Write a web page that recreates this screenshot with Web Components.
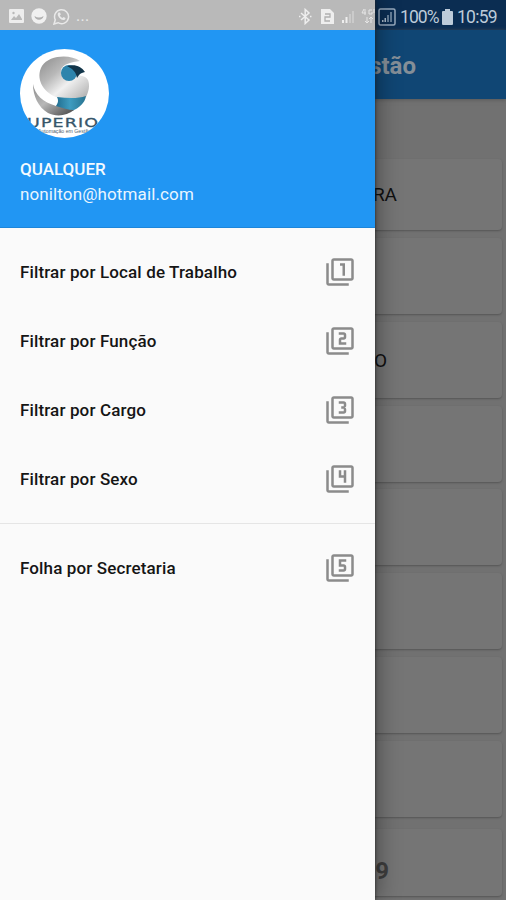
<!DOCTYPE html>
<html lang="pt-BR"><head><meta charset="utf-8"><title>Gestão</title>
<style>
html,body{margin:0;height:900px;overflow:hidden}
body{font-family:Roboto,"Liberation Sans",sans-serif;width:506px}
</style></head><body>
<app-screen></app-screen>
<script>
const define=(name,html,setup)=>customElements.define(name,class extends HTMLElement{
  connectedCallback(){
    if(this.shadowRoot)return;
    const t=document.createElement('template');
    t.innerHTML=html;
    this.attachShadow({mode:'open'}).append(t.content.cloneNode(true));
    if(setup)setup(this,this.shadowRoot);
  }
});

define('status-icons',`<style>
:host{display:flex;align-items:center;height:30px;box-sizing:border-box;padding:2px 0 0 9px;width:375px;color:#e9e9e9;background:#b9b9b9}
svg{display:block;flex:none}.dots{font-size:16px;letter-spacing:.3px;margin-left:6px;line-height:28px}.space{flex:1}
</style>
<svg width="15" height="15" viewBox="0 0 15 15"><rect width="15" height="14" rx="1" fill="#ededed"/><path d="M2 11l3-4 2 2 3-4 3 5v1z" fill="#b9b9b9"/><circle cx="4.500" cy="4" r="1.200" fill="#b9b9b9"/></svg>
<svg style="margin-left:7px" width="16" height="16" viewBox="0 0 16 16"><circle cx="8" cy="8" r="7.700" fill="#f0f0f0"/><path d="M3.500 8q4.500 3 9 0c-.5 5-8.500 5-9 0z" fill="#b0b0b0"/></svg>
<svg style="margin-left:6px" width="17" height="17" viewBox="0 0 17 17"><path d="M1 16l1.300-4.200A7 7 0 1 1 5 14.700z" fill="none" stroke="#e9e9e9" stroke-width="1.500"/><path d="M5.500 4.500l1.500 0 .8 2-1 1c.6 1.200 1.400 2 2.700 2.600l1-1.100 2 1c0 1.500-1 2.200-2.300 2.100C7.500 11.700 5 9 4.700 6.500c0-.8.200-1.500.8-2z" fill="#e9e9e9"/></svg>
<span class="dots">...</span><span class="space"></span>
<svg width="13" height="17" viewBox="0 0 13 17"><path d="M2 5l8 7-3.800 3.500v-14L10 5l-8 7M0 8.500h1.500M11 8.500h1.500" fill="none" stroke="#eee" stroke-width="1.500"/></svg>
<svg style="margin-left:9px" width="13" height="15" viewBox="0 0 13 15"><path d="M0 0h9l4 4v11H0z" fill="#eee"/><path d="M4 5h5v3H4v4h5" fill="none" stroke="#b0b0b0" stroke-width="1.300"/></svg>
<svg style="margin-left:8px" width="12" height="13" viewBox="0 0 12 13"><path d="M0 10h2v3H0zM3.500 7h2v6h-2z" fill="#eee"/><path d="M7 4h2v9H7zM10 1h2v12h-2z" fill="#cbcbcb"/></svg>
<svg style="margin-left:7px" width="14" height="17" viewBox="0 0 14 17"><path d="M3 1L1 5h4M4 1v6M11 2H8v4h3V4M13 1v4M6 9v6M4 13l2 2 2-2M10 15V9M8 11l2-2 2 2" fill="none" stroke="#e6e6e6"/></svg>`);

define('status-clock',`<style>
:host{display:flex;align-items:center;height:30px;box-sizing:border-box;padding:3px 8px 0 3px;background:#0b2d52;color:#bdcbd9;font-size:17.500px}
svg{display:block;flex:none}
.level{margin-left:4px;width:39px;letter-spacing:-.9px}.battery{margin:0 4px 0 3px}.time{letter-spacing:-.75px}
</style>
<svg width="18" height="18" viewBox="0 0 18 18"><rect x="1" y="1" width="16" height="16" rx="1.500" fill="none" stroke="#99abbe" stroke-width="1.500"/><path d="M4 12h1.500v2H4zM6.500 10H8v4H6.500z" fill="#aabaca"/><path d="M9 7h2v7H9zM12 4h2v10h-2z" fill="#647e98"/></svg>
<span class="level">100%</span>
<svg class="battery" width="11" height="16" viewBox="0 0 11 16"><path d="M3 0h5v2h2q1 0 1 1v12q0 1-1 1H1q-1 0-1-1V3q0-1 1-1h2z" fill="#bdcbd9"/></svg>
<span class="time">10:59</span>`);

define('list-card',`<style>
:host{display:flex;align-items:center;box-sizing:border-box;height:76px;margin-right:4px;border-radius:4px;background:#757575;box-shadow:0 1px 2px #555;padding-right:105px;justify-content:flex-end;color:#101010;font-size:19px}
</style><slot></slot>`);

define('dimmed-page',`<style>
:host{display:flex;flex-direction:column;height:900px;background:#717171;overflow:hidden}
.top{display:flex;justify-content:flex-end}status-clock{width:131px}
header{height:69px;flex:none;box-sizing:border-box;display:flex;align-items:center;justify-content:flex-end;padding:3px 90px 0 0;background:#104674;color:#858f98;font-size:24px;font-weight:700;box-shadow:0 1px 4px #585858}
main{display:flex;flex-direction:column;gap:7.850px;padding-top:60px}
list-card{flex:none}.first{height:71px}.o{padding-right:115px;padding-top:2px}
.last{height:67px;margin-top:4px;padding-right:113px;padding-top:17px;font-weight:700;font-size:24px;color:#3e3e3e}
</style>
<div class="top"><status-clock></status-clock></div><header>Gestão</header>
<main><list-card class="first">MOREIRA</list-card><list-card></list-card><list-card class="o">ANTONIO</list-card><list-card></list-card><list-card></list-card><list-card></list-card><list-card></list-card><list-card></list-card><list-card class="last">9</list-card></main>`);

define('company-logo',`<style>:host{display:block;width:89px;height:89px}svg{display:block}</style>
<svg width="89" height="89" viewBox="0 0 89 89"><defs>
<clipPath id="c"><circle cx="44.500" cy="44.500" r="44.500"/></clipPath>
<linearGradient id="g" x2="1" y2="1"><stop stop-color="#8b8b8b"/><stop offset=".35" stop-color="#b8b8b8"/><stop offset=".6" stop-color="#f0f0f0"/><stop offset=".85" stop-color="#c5c5c5"/><stop offset="1" stop-color="#a5a5a5"/></linearGradient>
<linearGradient id="h" x2="1" y2="1"><stop stop-color="#8d8d8d"/><stop offset=".45" stop-color="#b8b8b8"/><stop offset=".75" stop-color="#777"/><stop offset="1" stop-color="#444"/></linearGradient>
<linearGradient id="b"><stop stop-color="#1c6688"/><stop offset=".5" stop-color="#3e9cc0"/><stop offset="1" stop-color="#287390"/></linearGradient></defs>
<g clip-path="url(#c)"><rect width="89" height="89" fill="white"/>
<path d="M60 12C50 5 29 6 22 17c-7 12 1 26 14 31 10 3 21 3 30 0 3-6 4-12 2-17-3-5-10-5-17-5-7 0-11-2-10-5 1-6 11-8 19-9z" fill="url(#g)"/>
<circle cx="49" cy="24" r="8" fill="#2d84ac"/>
<path d="M47 17c8-2 14 0 18 6-5 1-6 3-8 6-1-6-4-9-10-12z" fill="#123549"/>
<path d="M37 48c10 1 20 2 29-1-1 7-7 12-14 15-6 1-11-1-18-3 4-4 5-7 3-11z" fill="url(#b)"/>
<path d="M13 35c2 11 10 18 23 22 7 2 12 4 18 4-7 6-18 7-26 3-10-6-15-17-15-29z" fill="url(#h)"/>
<text x="7" y="78" textLength="72" lengthAdjust="spacingAndGlyphs" font-family="DejaVu Sans" font-size="12.500" letter-spacing=".8" fill="#36566a" stroke="#36566a" stroke-width=".3">UPERIO</text>
<text x="18" y="83.500" textLength="53" lengthAdjust="spacingAndGlyphs" font-family="Liberation Sans" font-size="4.500" fill="#4e6471">Automação em Gestão</text></g></svg>`);

define('drawer-header',`<style>
:host{display:flex;flex-direction:column;height:198px;box-sizing:border-box;padding:19px 20px 0;background:#2196f3;color:#fff;border-bottom:1px solid #1d86da}
b{font-size:17px;font-weight:500;line-height:25px;margin-top:19px;color:#f3faff}span{font-size:17px;line-height:24px;color:#e9f5ff}
.email{letter-spacing:.12px}
</style><company-logo></company-logo><b><slot name="name"></slot></b><span class="email"><slot name="email"></slot></span>`);

const digits={
1:'M14 15h2V5h-4v2h2z',
2:'M17 13h-4v-2h2c1.100 0 2-.89 2-2V7c0-1.110-.9-2-2-2h-4v2h4v2h-2c-1.100 0-2 .89-2 2v4h6z',
3:'M17 13v-1.500c0-.83-.67-1.500-1.500-1.500.83 0 1.500-.67 1.500-1.500V7c0-1.110-.9-2-2-2h-4v2h4v2h-2v2h2v2h-4v2h4c1.100 0 2-.89 2-2z',
4:'M15 15h2V5h-2v4h-2V5h-2v6h4z',
5:'M17 13v-2c0-1.110-.9-2-2-2h-2V7h4V5h-6v6h4v2h-4v2h4c1.100 0 2-.89 2-2z'};
define('drawer-item',`<style>
:host{display:flex;align-items:center;justify-content:space-between;height:69px;box-sizing:border-box;padding:0 20px 0 20px;color:#151515;font-size:17px;font-weight:500;letter-spacing:.14px}
svg{display:block;fill:#8b8b8b}
</style><span><slot></slot></span><svg width="30" height="30" viewBox="0 0 24 24"><path d="M3 5H1v16c0 1.100.9 2 2 2h16v-2H3V5zM21 1H7c-1.100 0-2 .9-2 2v14c0 1.100.9 2 2 2h14c1.100 0 2-.9 2-2V3c0-1.100-.9-2-2-2zm0 16H7V3h14v14z"/><path class="d"/></svg>`,
(el,root)=>root.querySelector('.d').setAttribute('d',digits[el.getAttribute('number')]));

define('nav-drawer',`<style>
:host{display:flex;flex-direction:column;width:375px;height:900px;background:#fafafa;box-shadow:0 0 3px #222,2px 0 22px rgba(0,0,0,.4)}
nav{display:flex;flex-direction:column;padding-top:9px}
hr{height:1px;border:0;margin:10px 0 9px;width:100%;background:#e5e5e5}
</style><status-icons></status-icons>
<drawer-header><span slot="name">QUALQUER</span><span slot="email">nonilton@hotmail.com</span></drawer-header>
<nav><drawer-item number="1">Filtrar por Local de Trabalho</drawer-item><drawer-item number="2">Filtrar por Função</drawer-item><drawer-item number="3">Filtrar por Cargo</drawer-item><drawer-item number="4">Filtrar por Sexo</drawer-item><hr><drawer-item number="5">Folha por Secretaria</drawer-item></nav>`);

define('app-screen',`<style>
:host{display:block;position:relative;width:506px;height:900px;overflow:hidden}
nav-drawer{position:absolute;left:0;top:0}
</style><dimmed-page></dimmed-page><nav-drawer></nav-drawer>`);
</script></body></html>
